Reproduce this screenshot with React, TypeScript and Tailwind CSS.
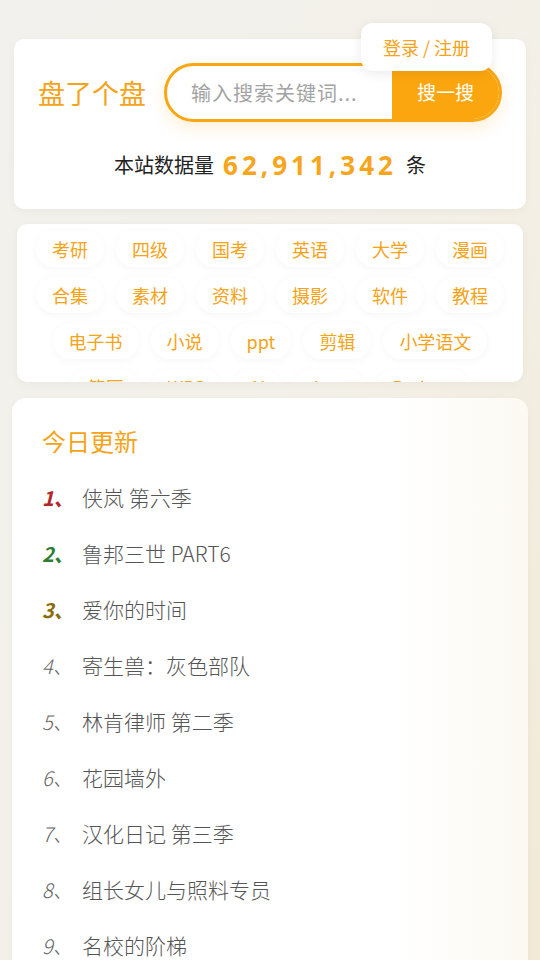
const tags = [
  "考研", "四级", "国考", "英语", "大学", "漫画",
  "合集", "素材", "资料", "摄影", "软件", "教程",
  "电子书", "小说", "ppt", "剪辑", "小学语文",
  "简历", "WPS", "AI", "Java", "Python",
];

const updates = [
  "侠岚 第六季",
  "鲁邦三世 PART6",
  "爱你的时间",
  "寄生兽：灰色部队",
  "林肯律师 第二季",
  "花园墙外",
  "汉化日记 第三季",
  "组长女儿与照料专员",
  "名校的阶梯",
  "黑袍纠察队 第四季",
];

// 前三名用不同颜色
const rankClass = [
  "text-[#b3262a] font-bold",
  "text-[#2e7d32] font-bold",
  "text-[#8a6d0b] font-bold",
];

export default function App() {
  return (
    <div
      className="min-h-screen w-[540px] bg-linear-to-br from-[#f2f1ed] via-[#f3f0e8] to-[#f2e9d4] pt-[39px] pb-6"
      style={{ fontFamily: '"Noto Sans CJK SC", "Noto Sans", sans-serif' }}
    >
      {/* 顶部搜索卡片 */}
      <div className="relative mx-[14px] h-[170px] rounded-[10px] bg-white px-6 pt-6 shadow-[0_2px_10px_rgba(0,0,0,0.04)]">
        <button className="absolute -top-4 right-[34px] flex h-12 w-[131px] items-center justify-center rounded-xl bg-white text-[18px] text-[#f5a319] shadow-[0_3px_12px_rgba(0,0,0,0.08)]">
          登录 / 注册
        </button>

        <div className="flex items-center gap-[17px]">
          <span className="w-[109px] whitespace-nowrap text-[27px] leading-none text-[#f5a319]">
            盘了个盘
          </span>
          <div className="flex h-[59px] w-[338px] overflow-hidden rounded-full border-[3px] border-[#f8a712] bg-white shadow-[0_6px_16px_rgba(245,166,35,0.18)]">
            <div className="flex flex-1 items-center pl-6 text-[20px] tracking-[1px] text-[#a3a3a3]">
              输入搜索关键词...
            </div>
            <div className="flex w-[107px] items-center justify-center bg-[#fca60f] text-[19px] text-white">
              搜一搜
            </div>
          </div>
        </div>

        <div className="mt-[28px] flex h-[30px] items-center justify-center gap-[9px] text-[20px] text-[#222]">
          <span>本站数据量</span>
          <span
            className="text-[26px] font-bold tracking-[4px] text-[#f7a51c]"
            style={{ fontFamily: '"Noto Sans", sans-serif' }}
          >
            62,911,342
          </span>
          <span>条</span>
        </div>
      </div>

      {/* 标签 */}
      <div className="mx-[17px] mt-[15px] h-[158px] overflow-hidden rounded-[10px] bg-white px-3 pt-[7px] shadow-[0_2px_10px_rgba(0,0,0,0.04)]">
        <div className="flex flex-wrap justify-center gap-x-3 gap-y-[10px]">
          {tags.map((t) => (
            <span
              key={t}
              className="h-9 rounded-full bg-white px-4 text-[18px] leading-9 text-[#f5a319] shadow-[0_2px_8px_rgba(0,0,0,0.035)]"
            >
              {t}
            </span>
          ))}
        </div>
      </div>

      {/* 今日更新 */}
      <div className="mx-3 mt-4 rounded-[14px] bg-linear-to-r from-white from-75% to-[#fcf9f2] px-[30px] pt-7 pb-6 shadow-[0_2px_10px_rgba(0,0,0,0.03)]">
        <h2 className="h-[30px] text-[24px] leading-[30px] text-[#f5a319]">今日更新</h2>
        <ul className="mt-[14px]">
          {updates.map((u, i) => (
            <li key={u} className="flex h-14 items-center text-[21px] font-light text-[#555]">
              <span className={`w-10 text-[20px] italic ${rankClass[i] ?? "text-[#666]"}`}>
                {i + 1}、
              </span>
              <span>{u}</span>
            </li>
          ))}
        </ul>
      </div>
    </div>
  );
}
